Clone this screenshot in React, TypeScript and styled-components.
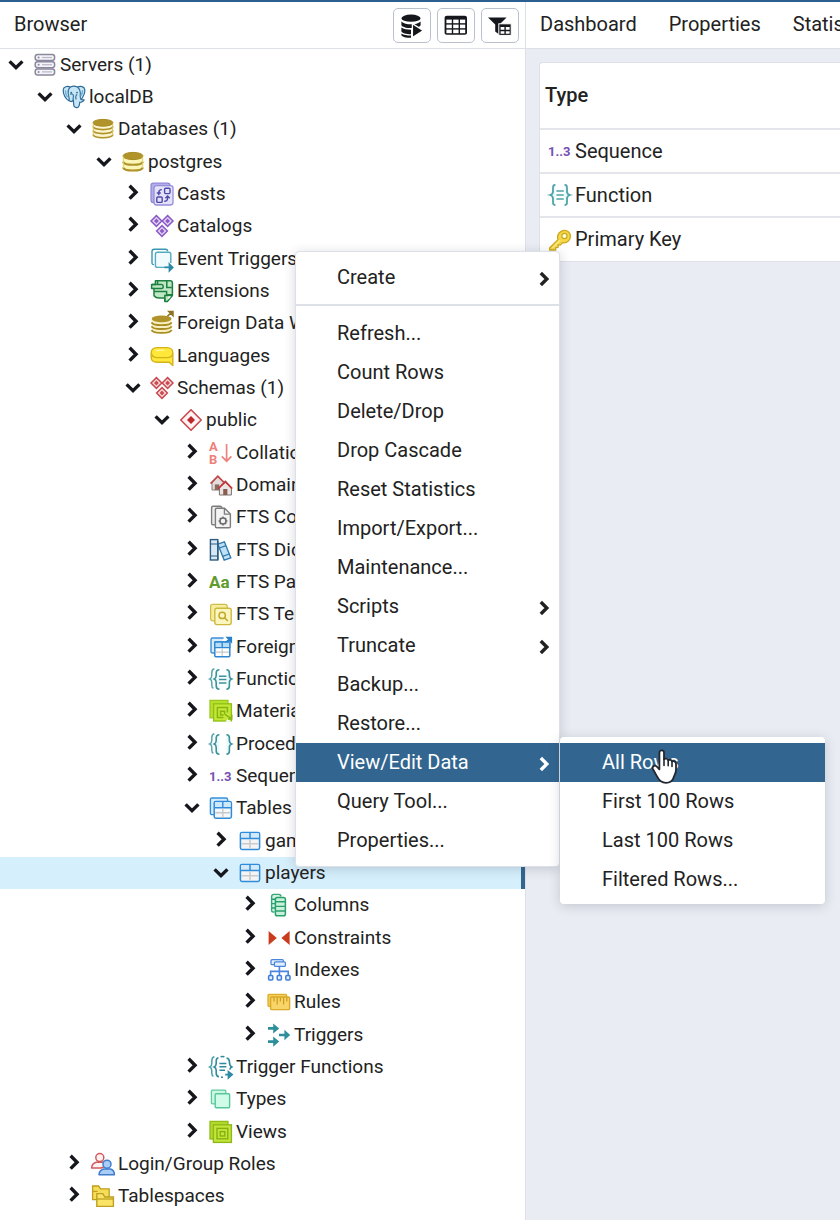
import React from "react";
import styled, { createGlobalStyle } from "styled-components";

const GlobalStyle = createGlobalStyle`
  *, *::before, *::after { box-sizing: border-box; }
  body {
    margin: 0;
    font-family: Roboto, "Liberation Sans", sans-serif;
    color: #222222;
    background: #ffffff;
  }
  button { font: inherit; color: inherit; cursor: pointer; }
`;

/* ---------- layout ---------- */

const Page = styled.div`
  position: relative;
  display: grid;
  grid-template-columns: 5fr 3fr;
  min-height: 100vh;
  border-top: 2px solid #2a5f8f;
  overflow: hidden;
`;

const Sidebar = styled.aside`
  min-width: 0;
  background: #ffffff;
`;

const Main = styled.main`
  display: flex;
  flex-direction: column;
  min-width: 0;
  border-left: 1px solid #dde0e6;
  background: #e9ecf3;
  overflow: hidden;
`;

const PaneHeader = styled.header`
  display: flex;
  align-items: center;
  height: 47px;
  padding-bottom: 2px;
  border-bottom: 1px solid #dde0e6;
  background: #ffffff;
`;

const BrowserTitle = styled.h1`
  flex: 1;
  margin: 0;
  padding-left: 14px;
  font-size: 20px;
  line-height: 24px;
  font-weight: 400;
`;

const Toolbar = styled.div`
  display: flex;
  gap: 6px;
  padding: 3px 6px 0 0;
`;

const ToolButton = styled.button`
  display: grid;
  place-items: center;
  width: 38px;
  height: 35px;
  padding: 0;
  border: 1px solid #bac1cd;
  border-radius: 5px;
  background: #ffffff;
`;

const Tabs = styled.nav`
  display: flex;
  gap: 32px;
  padding-left: 14px;
`;

const Tab = styled.button`
  padding: 0;
  border: 0;
  background: none;
  font-size: 20px;
  line-height: 24px;
  white-space: nowrap;
`;

/* ---------- tree ---------- */

const Tree = styled.ul`
  margin: 0;
  padding: 0;
  list-style: none;
`;

const TreeRow = styled.li<{ $depth: number; $selected?: boolean }>`
  display: flex;
  align-items: center;
  height: 32px;
  padding-left: ${(p) => 5 + Math.floor((p.$depth * 88) / 3)}px;
  white-space: nowrap;
  overflow: hidden;
  background: ${(p) => (p.$selected ? "#d6effc" : "transparent")};
  border-right: 4px solid ${(p) => (p.$selected ? "#326690" : "transparent")};

  &:nth-child(3n + 4) {
    height: 33px;
  }
`;

const Toggle = styled.button`
  display: grid;
  place-items: center;
  flex: none;
  width: 22px;
  height: 24px;
  padding: 0;
  border: 0;
  background: none;
`;

const IconBox = styled.span`
  display: block;
  flex: none;
  width: 24px;
  height: 24px;
  margin: 0 3px 0 6px;

  svg { display: block; overflow: visible; }
`;

const TreeLabel = styled.span`
  font-size: 19px;
  line-height: 24px;
`;

/* ---------- dependency table ---------- */

const Card = styled.section`
  margin: 13px 0 0 13px;
  border: 1px solid #dde0e6;
  border-right: 0;
  border-radius: 4px 0 0 0;
  background: #ffffff;
  overflow: hidden;
`;

const Table = styled.table`
  width: 100%;
  border-collapse: collapse;
  font-size: 20px;
  line-height: 24px;
`;

const HeadCell = styled.th`
  height: 66px;
  padding: 0 5px 2px;
  text-align: left;
  font-weight: 500;
`;

const Cell = styled.td`
  height: 44px;
  padding: 0 2px 1px;
  border-top: 2px solid #e3e5ea;
`;

const CellContent = styled.div`
  display: flex;
  align-items: center;
`;

/* ---------- menus ---------- */

const MenuList = styled.ul`
  position: absolute;
  width: 265px;
  margin: 0;
  padding: 6px 0;
  list-style: none;
  background: #ffffff;
  border: 1px solid #dde0e6;
  border-radius: 4px;
  box-shadow: 0 2px 12px rgba(40, 50, 70, 0.2);
`;

const ContextMenu = styled(MenuList)`
  top: 249px;
  left: 295px;
`;

const SubMenu = styled(MenuList)`
  top: -6px;
  left: calc(100% + 1px);
  padding: 6px 0 5px;
  border: 0;
`;

const MenuItem = styled.li`
  position: relative;
`;

const MenuButton = styled.button<{ $active?: boolean; $nested?: boolean }>`
  display: flex;
  align-items: center;
  justify-content: space-between;
  width: 100%;
  height: 39px;
  padding: 0 8px 2px ${(p) => (p.$nested ? 42 : 41)}px;
  border: 0;
  font-size: 20px;
  line-height: 24px;
  text-align: left;
  white-space: nowrap;
  background: ${(p) => (p.$active ? "#326690" : "transparent")};
  color: ${(p) => (p.$active ? "#ffffff" : "#222222")};

  svg { margin-top: 2px; }
`;

const Divider = styled.li`
  height: 2px;
  margin: 7px 0 8px;
  background: #dde0e6;
`;

const Pointer = styled.svg`
  position: absolute;
  top: 5px;
  left: 90px;
  pointer-events: none;
`;

/* ---------- icons ---------- */

type SvgProps = { children: React.ReactNode; size?: number };
const Svg = ({ children, size = 24 }: SvgProps) => (
  <svg width={size} height={size} viewBox="0 0 24 24" fill="none" aria-hidden="true">
    {children}
  </svg>
);

const ChevronDown = () => (
  <svg width="18" height="14" viewBox="0 0 18 14" fill="none" aria-hidden="true">
    <path d="M2.6 3.4 9 9.6l6.4-6.2" stroke="#15171c" strokeWidth="3.4" />
  </svg>
);

const ChevronRight = () => (
  <svg width="14" height="20" viewBox="0 0 14 20" fill="none" aria-hidden="true">
    <path d="m3.6 1.8 6.4 6.4-6.4 6.4" stroke="#15171c" strokeWidth="3.4" />
  </svg>
);

const MenuChevron = () => (
  <svg width="14" height="16" viewBox="0 0 14 16" fill="none" aria-hidden="true">
    <path d="m3.8 3 6 6-6 6" stroke="currentColor" strokeWidth="3.4" />
  </svg>
);

const ServersIcon = () => (
  <Svg>
    {[1.5, 8.7, 15.9].map((y) => (
      <g key={y}>
        <rect x="2.2" y={y} width="19.4" height="6" rx="2.4" fill="#f4f3f9" stroke="#8a889c" strokeWidth="1.5" />
        <circle cx="5.6" cy={y + 3} r="1" fill="#8a889c" />
        <path d={`M9 ${y + 3}h10`} stroke="#b9b7c9" strokeWidth="1.2" />
      </g>
    ))}
  </Svg>
);

const PostgresIcon = () => (
  <Svg>
    <path
      d="M6.800 15.600C3.600 14.400.9 8.800 1.200 4.800 1.400 1.600 5.200.8 8.400 2c2-1 5-1 7 0 3.200-1.200 7-.6 7.400 2.600.4 3.600-1.800 7.400-3.600 10 .8.6 2.200.2 3 .2-.6 1.800-3 2.600-4.400 2.400-.2 2.400-.4 5.200-2.600 5.400-2.600.4-3.600-1.400-3.600-4l-.2-3.400c-1.200 1.600-3.200 1.400-4.600.4Z"
      fill="#c6e6f5"
      stroke="#2f6a96"
      strokeWidth="1.2"
      strokeLinejoin="round"
    />
    <path
      d="M8.400 2C6 4 5.800 8 6.800 11.600c.8 2 .6 2.800 0 4M15.400 2c2.400 2 3.200 5.600 2.800 8.400-.2 2 .2 3 1 4.200M8 9.400c2-1.200 3.600-.2 3.400 2-.1 1.600-.8 2.400 0 3.800M15.200 9.600c-1.400.6-2 2.800-1 4.800"
      stroke="#2f6a96"
      strokeWidth="1.1"
    />
    <path d="M3.400 5.200c0 2.600 1 5.200 2 7M20.600 5c.2 2-.6 4-1.600 5.600" stroke="#6fb0d4" strokeWidth="1.4" />
    <circle cx="9.200" cy="7.600" r=".9" fill="#2f6a96" />
    <circle cx="15" cy="7.600" r=".9" fill="#2f6a96" />
  </Svg>
);

const DatabasesIcon = () => (
  <Svg>
    <path d="M2 6v12c0 2 4.500 3.400 10 3.400S22 20 22 18V6Z" fill="#fbf5cf" />
    <ellipse cx="12" cy="5.800" rx="10" ry="3.400" fill="#b0932a" stroke="#a98c22" />
    <path
      d="M2 9.600c.6 1.800 4.800 3 10 3s9.400-1.200 10-3M2 13.600c.6 1.800 4.800 3 10 3s9.400-1.200 10-3M2 17.600c.6 1.900 4.800 3.200 10 3.200s9.400-1.300 10-3.200"
      stroke="#b0932a"
      strokeWidth="1.6"
    />
    <path d="M2.300 6.500v11.800M21.700 6.500v11.800" stroke="#d8c25a" strokeWidth="1" />
  </Svg>
);

const DatabaseIcon = () => (
  <Svg>
    <path d="M2 6v12c0 2 4.500 3.400 10 3.400S22 20 22 18V6Z" fill="#fbf5b8" />
    <ellipse cx="12" cy="6" rx="10" ry="3.600" fill="#b0932a" stroke="#a98c22" />
    <path
      d="M2 11.600c.6 1.900 4.800 3.200 10 3.200s9.400-1.300 10-3.200M2 17.400c.6 1.900 4.800 3.200 10 3.200s9.400-1.300 10-3.200"
      stroke="#b0932a"
      strokeWidth="2"
    />
    <path d="M2.300 6.500v11.500M21.700 6.500v11.500" stroke="#e2cf6a" strokeWidth="1" />
  </Svg>
);

const CastsIcon = () => (
  <Svg>
    <rect x="1" y="1.200" width="19" height="19.400" rx="2.400" fill="#b3aee6" stroke="#8c86d8" strokeWidth="1.2" />
    <rect x="4" y="3.600" width="19" height="19.400" rx="2.400" fill="#e4e2fa" stroke="#938edb" strokeWidth="1.3" />
    <rect x="14.600" y="6.200" width="5.400" height="5.400" rx="1" stroke="#4f48a8" strokeWidth="1.4" />
    <rect x="6.800" y="15" width="5.400" height="5.400" rx="1" stroke="#4f48a8" strokeWidth="1.4" />
    <path d="M11.800 7.600c-2.200 0-3 1-3 3v2.600M6.800 11h4M14.200 19.200c2.400 0 3.400-1 3.400-3v-1.600M15.400 16.200l2.200-2.200 2.200 2.200" stroke="#4f48a8" strokeWidth="1.4" />
  </Svg>
);

const TripleDiamond = ({ color, fill }: { color: string; fill: string }) => (
  <Svg>
    {[
      [6.4, 7],
      [17.6, 7],
      [12, 17],
    ].map(([x, y]) => (
      <g key={`${x}-${y}`}>
        <path d={`M${x} ${y - 5.4}l5.400 5.400-5.400 5.400-5.400-5.400Z`} fill={fill} stroke={color} strokeWidth="1.5" />
        <path d={`M${x} ${y - 2.4}l2.400 2.400-2.400 2.400-2.400-2.400Z`} fill={color} />
      </g>
    ))}
  </Svg>
);

const CatalogsIcon = () => <TripleDiamond color="#8a5cc4" fill="#e6d4f8" />;
const SchemasIcon = () => <TripleDiamond color="#c94a50" fill="#fbdcdc" />;

const SchemaIcon = () => (
  <Svg>
    <path d="M12 1.800 22.200 12 12 22.200 1.800 12Z" fill="#fff3f3" stroke="#c9484e" strokeWidth="1.6" strokeLinejoin="round" />
    <path d="m12 8 4 4-4 4-4-4Z" fill="#c0272d" />
  </Svg>
);

const EventTriggersIcon = () => (
  <Svg>
    <path d="M4 17.600c-1.600 0-2-.6-2-2V4.400c0-1.600.6-2.200 2.200-2.200h11.200c1.400 0 2.200.4 2.200 2" stroke="#3b96ae" strokeWidth="1.4" />
    <path d="M18 20.400H7.400c-1.400 0-2-.6-2-2V7.200c0-1.400.6-2 2-2h11.400c1.400 0 2 .6 2 2V16" fill="#f1fbfd" stroke="#55aabf" strokeWidth="1.4" />
    <path d="M14.400 20.400h7M19.400 17l3.400 3.400-3.400 3.400Z" fill="#2e8ba6" stroke="#2e8ba6" strokeWidth="1.6" />
  </Svg>
);

const ExtensionsIcon = () => (
  <Svg>
    <path d="M5.400 1.800h14.800c1.400 0 2.200.8 2.200 2.200v12.600l-5 5.800h-2.600V19H9.200c-2 0-4-.6-5.200-2.200v-7.400H1.600V5.600h3.800Z" fill="#bfe8c4" stroke="#1e8040" strokeWidth="1.5" strokeLinejoin="round" />
    <path d="M2 5.600h9.600c1 0 1.600.6 1.600 1.800s-.6 2-1.600 2H3.400M4 12.600h12.600v3.200h5.400M14.800 22v-5.400H22M7.600 2v3.600M16.800 2v6.600h5" stroke="#1e8040" strokeWidth="1.5" />
    <path d="M18.400 20.400v-3h2.600Z" fill="#ffffff" />
  </Svg>
);

const ForeignWrapperIcon = () => (
  <Svg>
    <path d="M1.600 9v10.400c0 1.800 4.500 3.200 10 3.200s10-1.400 10-3.200V9Z" fill="#f8efc0" />
    <ellipse cx="11.600" cy="7.800" rx="10" ry="3.400" fill="#b0932a" />
    <path
      d="M1.600 11.400c.6 1.700 4.800 2.800 10 2.800s9.400-1.100 10-2.800M1.600 15.200c.6 1.700 4.800 2.800 10 2.800s9.400-1.100 10-2.800M1.600 19c.6 1.700 4.800 2.900 10 2.900s9.400-1.200 10-2.900"
      stroke="#a98c22"
      strokeWidth="1.8"
    />
    <path d="m17.400 5.400 3.400-3.400M18.800.6h4.200v4.200Z" fill="#8f7420" stroke="#8f7420" strokeWidth="1.5" />
  </Svg>
);

const LanguagesIcon = () => (
  <Svg>
    <path d="M7 3.600h10c3.400 0 5.800 2.200 5.800 5v13l-3.600-3.400H7c-3.600 0-5.800-2-5.800-4.600V8.400C1.200 5.600 3.600 3.600 7 3.600Z" fill="#ffe83a" stroke="#d4b21a" strokeWidth="1.4" strokeLinejoin="round" />
    <path d="M1.600 9.600c.4 2.600 2.600 4 5.800 4h9.200c3.400 0 5.600-1.200 6-3.800" stroke="#d4b21a" strokeWidth="1.4" />
    <path d="M6 6.600c1-.4 2-.5 3.400-.5h5" stroke="#fff7ae" strokeWidth="1.4" />
  </Svg>
);

const CollationsIcon = () => (
  <Svg>
    <text x="0" y="10" fontFamily="Roboto, sans-serif" fontWeight="700" fontSize="13" fill="#ee7f7a">A</text>
    <text x="0" y="23" fontFamily="Roboto, sans-serif" fontWeight="700" fontSize="13" fill="#ee7f7a">B</text>
    <path d="M17.600 3v17.200M12.800 15.400l4.800 4.800 4.800-4.800" stroke="#ea8480" strokeWidth="1.7" />
  </Svg>
);

const DomainsIcon = () => (
  <Svg>
    <path d="M3 9.400 8.800 3.400l6 6V17H3Z" fill="#e2dedb" stroke="#8b7d78" strokeWidth="1" />
    <path d="M1.600 10.600 8.800 3.200 16 10.400" stroke="#c0484a" strokeWidth="1.7" />
    <path d="M5.800 17v-5.600h4.400V17Z" fill="#8b6a62" />
    <path d="M10.400 14.400 16.400 9l6 5.600V22H10.400Z" fill="#e9e6e3" stroke="#7d706c" strokeWidth="1" />
    <path d="M9.200 15.600 16.400 8.600l6.800 7" stroke="#c0393c" strokeWidth="1.8" />
    <path d="M14.200 22v-6h4.200v6Z" fill="#8a5d52" />
  </Svg>
);

const FtsConfigIcon = () => (
  <Svg>
    <path d="M5.800 19.800H4c-1 0-1.400-.4-1.400-1.400V2.600c0-1 .4-1.400 1.400-1.400h7.600l1.600 1.600" fill="#eeeeee" stroke="#7c7c7c" strokeWidth="1.4" />
    <path d="M6.400 4.600c0-1 .4-1.400 1.400-1.400h7.800l5.800 5.800v12.400c0 1-.4 1.400-1.400 1.400H7.800c-1 0-1.400-.4-1.400-1.400Z" fill="#f3f3f3" stroke="#7c7c7c" strokeWidth="1.4" />
    <path d="M15.400 3.400V9.200h5.800" stroke="#7c7c7c" strokeWidth="1.3" />
    <circle cx="14" cy="16" r="3" stroke="#6a6a6a" strokeWidth="1.5" />
    <path d="M14 11.600V13M14 19v1.400M9.600 16H11M17 16h1.400M10.900 12.900l1 1M16.100 18.100l1 1M10.900 19.100l1-1M16.100 13.900l1-1" stroke="#6a6a6a" strokeWidth="1.4" />
  </Svg>
);

const FtsDictIcon = () => (
  <Svg>
    <rect x="1.400" y="1.600" width="7.400" height="20.400" fill="#d8e9f4" stroke="#2d5d80" strokeWidth="1.4" />
    <path d="M1.400 6h7.400M1.400 18h7.400" stroke="#2d5d80" strokeWidth="1.2" />
    <path d="m8.800 6.200 6.600-2.400 6.400 16-6.600 2.400Z" fill="#bfe0f6" stroke="#2f79ad" strokeWidth="1.4" />
    <path d="m10.400 10 6.600-2.400M13.600 18.400l6.600-2.400" stroke="#2f79ad" strokeWidth="1.2" />
    <path d="M8.800 3v19" stroke="#2d5d80" strokeWidth="1.4" />
  </Svg>
);

const FtsParserIcon = () => (
  <Svg>
    <text x="0" y="18" fontFamily="Roboto, sans-serif" fontWeight="700" fontSize="17" fill="#5f9a2d">Aa</text>
  </Svg>
);

const FtsTemplateIcon = () => (
  <Svg>
    <rect x="1.600" y="2.400" width="16.600" height="16.400" rx="2" fill="#f6eda0" stroke="#cfbd4a" strokeWidth="1.3" />
    <rect x="5.800" y="6.200" width="16.400" height="16.400" rx="2" fill="#fbf5c0" stroke="#cdb93f" strokeWidth="1.4" />
    <circle cx="13.200" cy="13.400" r="3.200" stroke="#c2a92c" strokeWidth="1.5" />
    <path d="m15.600 15.800 3.200 3.200" stroke="#c2a92c" strokeWidth="1.6" />
  </Svg>
);

const ForeignTablesIcon = () => (
  <Svg>
    <path d="M5.400 18H3.600c-1 0-1.600-.6-1.600-1.600V4.600C2 3.600 2.600 3 3.600 3h11" stroke="#3b8fd6" strokeWidth="1.4" fill="#d8edfc" />
    <rect x="5.800" y="7" width="15" height="14.800" rx="1" fill="#ffffff" stroke="#2f86d2" strokeWidth="1.5" />
    <path d="M5.800 7h15v5.600h-15Z" fill="#b5dcf8" stroke="#2f86d2" strokeWidth="1.3" />
    <path d="M13.200 7v5.600" stroke="#2f86d2" strokeWidth="1.3" />
    <path d="M13.200 13.400V21M6.600 17.200h13.400" stroke="#c3c7cb" strokeWidth="1.2" />
    <path d="M16.600 7.400 20 4.200M18 2.400h4.400v4.600Z" fill="#2a7fc9" stroke="#2a7fc9" strokeWidth="1.4" />
  </Svg>
);

const LeftBrace = "M5.400 1.800C3.200 2.200 2.800 4 2.800 6v2.600c0 1.800-.6 2.800-2 3.400 1.400.6 2 1.600 2 3.400V18c0 1.800.4 2.800 1.600 3.200";
const BracePair =
  "M10.400 2.800c-2.600 0-3.200 1.400-3.200 3.200v2.600c0 1.800-.6 2.800-2 3.400 1.400.6 2 1.600 2 3.400V19c0 2 .6 3.200 3.200 3.200M17.400 2.800c2.400 0 3 1.400 3 3.200v2.600c0 1.800.6 2.800 2.200 3.400-1.600.6-2.200 1.600-2.200 3.400V19c0 2-.6 3.200-3 3.200";

const FunctionsIcon = () => (
  <Svg>
    <path d={LeftBrace} stroke="#5aa6ac" strokeWidth="1.5" />
    <path d={BracePair} fill="#eaf9fb" stroke="#3b929b" strokeWidth="1.6" />
    <path d="M10 9.200h7.400M10 12.600h7.400M10 16h7.400" stroke="#3b929b" strokeWidth="1.5" />
  </Svg>
);

const ProceduresIcon = () => (
  <Svg>
    <path d={LeftBrace} stroke="#5aa6ac" strokeWidth="1.5" />
    <path d={BracePair} fill="#eaf9fb" stroke="#3b929b" strokeWidth="1.6" />
  </Svg>
);

const FunctionIcon = () => (
  <Svg>
    <path d="M7.400 2C5 2 5 3.200 5 5.600v2.600c0 2.200-.6 3.200-2.800 3.800 2.200.6 2.800 1.600 2.800 3.800v2.600C5 20.800 5 22 7.400 22M16.600 2C19 2 19 3.200 19 5.600v2.600c0 2.200.6 3.200 2.800 3.800-2.200.6-2.800 1.600-2.800 3.800v2.600c0 2.400 0 3.600-2.400 3.600" fill="#eafafa" stroke="#4fa3a8" strokeWidth="1.8" />
    <path d="M8.400 8h7.400M8.400 12h7.400M8.400 16h7.400" stroke="#4fa3a8" strokeWidth="1.6" />
  </Svg>
);

const MaterializedIcon = () => (
  <Svg>
    <rect x="1" y="1.400" width="18" height="17.400" fill="#b7e02c" stroke="#9ac81e" strokeWidth="1.3" />
    <rect x="4.600" y="4.800" width="17.800" height="17.200" fill="#c3e836" stroke="#93c018" strokeWidth="1.4" />
    <path d="M18.400 13.400V8.400H8.400v10h6M15.600 15.400v-3.200h-4v3.800h3" stroke="#86b412" strokeWidth="1.5" />
    <path d="M16.400 22.800 19 19.400l3.600 3.400Z" fill="#ffffff" />
    <path d="m16 15.400 6.800 4.400M22.800 15.400V20h-4" stroke="#86b412" strokeWidth="1.4" />
  </Svg>
);

const ViewsIcon = () => (
  <Svg>
    <rect x="1" y="1.400" width="18" height="17.600" fill="#b2d92a" stroke="#90bb18" strokeWidth="1.3" />
    <rect x="4.400" y="4.800" width="18" height="17.600" fill="#c2e63a" stroke="#8fb91a" strokeWidth="1.4" />
    <rect x="8" y="8.400" width="10.800" height="10.400" stroke="#86af12" strokeWidth="1.4" />
    <rect x="11.200" y="11.600" width="4.600" height="4.400" stroke="#86af12" strokeWidth="1.4" />
  </Svg>
);

const SequenceIcon = () => (
  <Svg>
    <text x="0" y="17" fontFamily="Roboto, sans-serif" fontWeight="700" fontSize="13" fill="#7650b4">1..3</text>
  </Svg>
);

const TablesIcon = () => (
  <Svg>
    <path d="M5 18.600H3c-1 0-1.600-.6-1.600-1.600V3.600C1.400 2.600 2 2 3 2h14c1 0 1.600.6 1.600 1.600V5" stroke="#3590dc" strokeWidth="1.4" fill="#d8edfc" />
    <rect x="5.200" y="5.400" width="17.200" height="16.800" rx="1.600" fill="#f6f7f8" stroke="#2f8cdb" strokeWidth="1.5" />
    <path d="M6 6.200h15.600v5.400H6Z" fill="#cfe8fb" />
    <path d="M5.200 11.800h17.200M13.800 5.400v6.400" stroke="#2f8cdb" strokeWidth="1.4" />
    <path d="M13.800 12.600v9M6.200 16.800h15.200" stroke="#c6c9cc" strokeWidth="1.4" />
  </Svg>
);

const TableIcon = () => (
  <Svg>
    <rect x="2.400" y="3.400" width="19.200" height="17" rx="1.600" fill="#f4f4f4" stroke="#2f8cdb" strokeWidth="1.5" />
    <path d="M3.200 4.200h17.600v5H3.200Z" fill="#d3eafb" />
    <path d="M2.400 9.600h19.200M12 3.400v6.200" stroke="#2f8cdb" strokeWidth="1.5" />
    <path d="M12 10.600v9M3.400 14.800h17.200" stroke="#c9cbcd" strokeWidth="1.6" />
  </Svg>
);

const ColumnsIcon = () => (
  <Svg>
    <path d="M7.400 19H6.200c-1 0-1.600-.6-1.600-1.600V3.600C4.600 2.200 5.400 1.400 6.800 1.400h5c1.400 0 2.200.8 2.200 2.200" fill="#d3f3e3" stroke="#35a877" strokeWidth="1.4" />
    <rect x="8.400" y="4.400" width="10" height="18.400" rx="1.800" fill="#c9f0dd" stroke="#2aa06c" strokeWidth="1.5" />
    <path d="M8.400 8.800h10M8.400 13.400h10M8.400 18h10M4.600 6.200h3.800M4.600 10.600h3.800M4.600 15h3.800" stroke="#2aa06c" strokeWidth="1.4" />
  </Svg>
);

const ConstraintsIcon = () => (
  <Svg>
    <path d="m1.600 5 8.200 7-8.200 7Z" fill="#ca3a1c" />
    <path d="M22.600 5 14.400 12l8.200 7Z" fill="#ca3a1c" />
  </Svg>
);

const IndexesIcon = () => (
  <Svg>
    <rect x="4" y="1.600" width="12.400" height="5" rx="1.200" fill="#e3effd" stroke="#4a86dc" strokeWidth="1.3" />
    <rect x="7.400" y="3.800" width="11" height="4.600" rx="1.200" fill="#e3effd" stroke="#4a86dc" strokeWidth="1.3" />
    <path d="M12.400 8.600V17M3.600 17v-3.600h17.600V17" stroke="#4a86dc" strokeWidth="1.6" />
    {[1.6, 10.2, 18.8].map((x) => (
      <rect key={x} x={x} y="17.400" width="4.200" height="4.600" rx="1" fill="#e3effd" stroke="#3f7dd8" strokeWidth="1.5" />
    ))}
  </Svg>
);

const RulesIcon = () => (
  <Svg>
    <rect x="1" y="4.400" width="18.600" height="12" rx="1" fill="#f5cf5a" stroke="#dcae2c" strokeWidth="1.3" />
    <rect x="3.600" y="7" width="19" height="12.600" rx="1" fill="#f8d568" stroke="#d9a928" strokeWidth="1.4" />
    <path d="M7 7.400v4M10.200 7.400v7M13.400 7.400v4M16.600 7.400v7M19.800 7.400v4" stroke="#cf9e20" strokeWidth="1.3" />
  </Svg>
);

const TriggersIcon = () => (
  <Svg>
    <path d="M1 5.400h8M1 18.600h8M12 12h8" stroke="#2e8f9c" strokeWidth="2.6" />
    <path d="M6.200.4 12.200 5.400l-6 5.200ZM6.200 13.400l6 5.200-6 5.200ZM17.400 6.800l5.800 5.200-5.800 5.200Z" fill="#2e8f9c" />
  </Svg>
);

const TriggerFunctionsIcon = () => (
  <Svg>
    <path d={LeftBrace} stroke="#4ba0a8" strokeWidth="1.5" />
    <path d="M9.400 2.800C7.400 3.200 7.200 4.400 7.200 6v2.600c0 1.800-.6 2.800-2 3.400 1.400.6 2 1.600 2 3.400V18c0 2.200.6 3.600 2.800 3.800M17.600 3c2.200.6 2.800 1.800 2.800 3.400 0 2.400.4 4.400 2.400 5.600-1.200.6-1.800 1.400-2 2.600M11.600 1.800c1.200-.4 2.600-.4 3.800 0" stroke="#2f8a9c" strokeWidth="1.6" />
    <path d="M10.400 8.400h7M10.400 11.800h7M10.400 15.200h5.600M12 22.200h2" stroke="#2f8a9c" strokeWidth="1.5" />
    <path d="M16.200 19.600h4M19.400 16.600l3.800 3-3.800 3.400Z" fill="#2e8ba6" stroke="#2e8ba6" strokeWidth="1.6" />
  </Svg>
);

const TypesIcon = () => (
  <Svg>
    <rect x="2.400" y="3.200" width="14.400" height="13.600" rx="1" fill="#c9f7e2" stroke="#5ccba0" strokeWidth="1.3" />
    <rect x="6.200" y="6.800" width="14.400" height="14" rx="1" fill="#cffbe8" stroke="#55c79b" strokeWidth="1.4" />
  </Svg>
);

const RolesIcon = () => (
  <Svg>
    <circle cx="8.800" cy="5.600" r="4" fill="#fff2f2" stroke="#d25a5f" strokeWidth="1.5" />
    <path d="M.6 16c.2-3.400 1.800-5 4.600-5.800h7c2.200.6 3.400 1.800 4 3.400L10 16Z" fill="#fff2f2" stroke="#d25a5f" strokeWidth="1.5" strokeLinejoin="round" />
    <circle cx="16" cy="12.200" r="4" fill="#a9cdf6" stroke="#3f7dcc" strokeWidth="1.5" />
    <path d="M8 22.800c.2-3 1.600-5 4.600-5.800h7c2.400.8 3.800 2.800 3.800 5.800Z" fill="#a9cdf6" stroke="#3f7dcc" strokeWidth="1.5" strokeLinejoin="round" />
  </Svg>
);

const TablespacesIcon = () => (
  <Svg>
    <path d="M1.600 15.600V2h6l2 2.800h8.600v10.800Z" fill="#f6dd58" stroke="#bf9f20" strokeWidth="1.3" />
    <path d="M1.600 7.400h5" stroke="#bf9f20" strokeWidth="1.2" />
    <path d="M5.800 22.400V9.600h6l2 3.400h8.600v9.400Z" fill="#f9e468" stroke="#bf9f20" strokeWidth="1.4" />
    <path d="M5.800 15h16.400" stroke="#bf9f20" strokeWidth="1.3" />
  </Svg>
);

const KeyIcon = () => (
  <Svg>
    <path d="M1.600 21 10 12.600c-.8-2.200-.4-4.800 1.400-6.800 2.600-2.800 6.600-3.200 9.200-.8 2.600 2.600 2.400 6.400-.2 9-1.800 1.600-3.800 2.200-6 1.600l-1.800 2.200-2.400.2-.2 2.400-2.200.2-.2 2.400H1.600Z" fill="#f4d84a" stroke="#cba91e" strokeWidth="1.3" strokeLinejoin="round" />
    <circle cx="16.400" cy="9" r="2.600" fill="#fffbe0" stroke="#cba91e" strokeWidth="1.2" />
    <path d="m4.400 21 7.600-7.600" stroke="#fbeb8c" strokeWidth="1.2" />
  </Svg>
);

const QueryToolIcon = () => (
  <Svg>
    <ellipse cx="11" cy="4.200" rx="9.600" ry="3.600" fill="#15171c" />
    <path d="M1.400 7.400c2 2 5.600 2.800 9.600 2.800s7.600-.8 9.600-2.800v3.800c-.6 1.600-4.800 2.900-9.600 2.900s-9-1.300-9.600-2.900Z" fill="#15171c" />
    <path d="M1.400 13.600c2 1.600 5.600 2.200 9.600 2.200v4.400c-4.800 0-9-1.200-9.600-2.800ZM1.400 19.600c2 1.600 5.600 2 9.600 2v2.200c-4.800 0-9-1-9.600-2.600Z" fill="#15171c" />
    <path d="m12.400 9.600 11 7-11 7Z" fill="#15171c" stroke="#ffffff" strokeWidth="1.3" />
  </Svg>
);

const ViewDataIcon = () => (
  <Svg>
    <path d="M.6 4.200C.6 2.600 1.400 1.800 3 1.800h17.600c1.600 0 2.400.8 2.400 2.400v14.400c0 1.400-.8 2.200-2.400 2.200H3C1.400 20.800.6 20 .6 18.600Z" fill="#15171c" />
    {[5.6, 10.6, 15.6].map((y) => (
      <g key={y} fill="#ffffff">
        <rect x="2.400" y={y} width="5.400" height="3.600" />
        <rect x="9.200" y={y} width="5.400" height="3.600" />
        <rect x="16" y={y} width="5.200" height="3.600" />
      </g>
    ))}
  </Svg>
);

const FilterIcon = () => (
  <Svg>
    <path d="M0 3.400h18.600l-6.400 6.400v11.400l-5-3.600V10.600Z" fill="#15171c" />
    <rect x="10.800" y="9.800" width="12.400" height="11.600" fill="#15171c" stroke="#ffffff" strokeWidth="1" />
    <path d="M12.600 13h3.800v2.800h-3.800ZM17.800 13h3.800v2.800h-3.800ZM12.600 17.200h3.800v2.600h-3.800ZM17.800 17.200h3.800v2.600h-3.800Z" fill="#ffffff" />
  </Svg>
);

const HandPointer = () => (
  <Pointer width="30" height="38" viewBox="0 0 30 38" fill="none" aria-hidden="true">
    <path
      d="M9.400 4.600c0-3 4.600-3 4.600 0v6.600c1.200-1 3.800-.8 4.200 1 1.200-.9 3.400-.4 3.800 1.200 1.400-.8 4 0 4 2.400V22c0 3.400-1.800 5.400-2.600 8-1 3.200-4 4.800-7.400 4.800-4.200 0-6.800-2-8.800-6.200L3 21.200c-1.400-2.600 1.600-4.600 3.600-2.800l2.800 3Z"
      fill="#ffffff"
      stroke="#22262e"
      strokeWidth="1.8"
      strokeLinejoin="round"
    />
    <path d="M14 11v6.400M18.200 12v5.800M22 13.400v5" stroke="#22262e" strokeWidth="1.6" strokeLinecap="round" />
  </Pointer>
);

/* ---------- data ---------- */

type Node = {
  label: string;
  depth: number;
  icon: React.ComponentType;
  open?: boolean;
  selected?: boolean;
};

const NODES: Node[] = [
  { label: "Servers (1)", depth: 0, icon: ServersIcon, open: true },
  { label: "localDB", depth: 1, icon: PostgresIcon, open: true },
  { label: "Databases (1)", depth: 2, icon: DatabasesIcon, open: true },
  { label: "postgres", depth: 3, icon: DatabaseIcon, open: true },
  { label: "Casts", depth: 4, icon: CastsIcon },
  { label: "Catalogs", depth: 4, icon: CatalogsIcon },
  { label: "Event Triggers", depth: 4, icon: EventTriggersIcon },
  { label: "Extensions", depth: 4, icon: ExtensionsIcon },
  { label: "Foreign Data Wrappers", depth: 4, icon: ForeignWrapperIcon },
  { label: "Languages", depth: 4, icon: LanguagesIcon },
  { label: "Schemas (1)", depth: 4, icon: SchemasIcon, open: true },
  { label: "public", depth: 5, icon: SchemaIcon, open: true },
  { label: "Collations", depth: 6, icon: CollationsIcon },
  { label: "Domains", depth: 6, icon: DomainsIcon },
  { label: "FTS Configurations", depth: 6, icon: FtsConfigIcon },
  { label: "FTS Dictionaries", depth: 6, icon: FtsDictIcon },
  { label: "FTS Parsers", depth: 6, icon: FtsParserIcon },
  { label: "FTS Templates", depth: 6, icon: FtsTemplateIcon },
  { label: "Foreign Tables", depth: 6, icon: ForeignTablesIcon },
  { label: "Functions", depth: 6, icon: FunctionsIcon },
  { label: "Materialized Views", depth: 6, icon: MaterializedIcon },
  { label: "Procedures", depth: 6, icon: ProceduresIcon },
  { label: "Sequences", depth: 6, icon: SequenceIcon },
  { label: "Tables", depth: 6, icon: TablesIcon, open: true },
  { label: "games", depth: 7, icon: TableIcon },
  { label: "players", depth: 7, icon: TableIcon, open: true, selected: true },
  { label: "Columns", depth: 8, icon: ColumnsIcon },
  { label: "Constraints", depth: 8, icon: ConstraintsIcon },
  { label: "Indexes", depth: 8, icon: IndexesIcon },
  { label: "Rules", depth: 8, icon: RulesIcon },
  { label: "Triggers", depth: 8, icon: TriggersIcon },
  { label: "Trigger Functions", depth: 6, icon: TriggerFunctionsIcon },
  { label: "Types", depth: 6, icon: TypesIcon },
  { label: "Views", depth: 6, icon: ViewsIcon },
  { label: "Login/Group Roles", depth: 2, icon: RolesIcon },
  { label: "Tablespaces", depth: 2, icon: TablespacesIcon },
];

const TOOLS = [
  { label: "Query Tool", icon: QueryToolIcon },
  { label: "View Data", icon: ViewDataIcon },
  { label: "Filtered Rows", icon: FilterIcon },
];

const DEPENDENCIES = [
  { label: "Sequence", icon: SequenceIcon },
  { label: "Function", icon: FunctionIcon },
  { label: "Primary Key", icon: KeyIcon },
];

const MENU: { label: string; arrow?: boolean }[] = [
  { label: "Refresh..." },
  { label: "Count Rows" },
  { label: "Delete/Drop" },
  { label: "Drop Cascade" },
  { label: "Reset Statistics" },
  { label: "Import/Export..." },
  { label: "Maintenance..." },
  { label: "Scripts", arrow: true },
  { label: "Truncate", arrow: true },
  { label: "Backup..." },
  { label: "Restore..." },
];

const VIEW_DATA = ["All Rows", "First 100 Rows", "Last 100 Rows", "Filtered Rows..."];

const Entry = ({ label, arrow }: { label: string; arrow?: boolean }) => (
  <MenuItem role="none">
    <MenuButton type="button" role="menuitem" aria-haspopup={arrow ? "menu" : undefined}>
      {label}
      {arrow && <MenuChevron />}
    </MenuButton>
  </MenuItem>
);

export default function App() {
  return (
    <>
      <GlobalStyle />
      <Page>
        <Sidebar>
          <PaneHeader>
            <BrowserTitle>Browser</BrowserTitle>
            <Toolbar>
              {TOOLS.map(({ label, icon: Icon }) => (
                <ToolButton key={label} type="button" aria-label={label}>
                  <Icon />
                </ToolButton>
              ))}
            </Toolbar>
          </PaneHeader>
          <Tree role="tree" aria-label="Browser">
            {NODES.map(({ label, depth, icon: Icon, open, selected }) => (
              <TreeRow
                key={label}
                role="treeitem"
                aria-level={depth + 1}
                aria-expanded={!!open}
                aria-selected={!!selected}
                $depth={depth}
                $selected={selected}
              >
                <Toggle type="button" aria-label={`${open ? "Collapse" : "Expand"} ${label}`}>
                  {open ? <ChevronDown /> : <ChevronRight />}
                </Toggle>
                <IconBox>
                  <Icon />
                </IconBox>
                <TreeLabel>{label}</TreeLabel>
              </TreeRow>
            ))}
          </Tree>
        </Sidebar>

        <Main>
          <PaneHeader>
            <Tabs aria-label="Object panels">
              <Tab type="button">Dashboard</Tab>
              <Tab type="button">Properties</Tab>
              <Tab type="button">Statistics</Tab>
            </Tabs>
          </PaneHeader>
          <Card>
            <Table>
              <thead>
                <tr>
                  <HeadCell scope="col">Type</HeadCell>
                </tr>
              </thead>
              <tbody>
                {DEPENDENCIES.map(({ label, icon: Icon }) => (
                  <tr key={label}>
                    <Cell>
                      <CellContent>
                        <IconBox>
                          <Icon />
                        </IconBox>
                        {label}
                      </CellContent>
                    </Cell>
                  </tr>
                ))}
              </tbody>
            </Table>
          </Card>
        </Main>

        <ContextMenu role="menu" aria-label="Table actions">
          <Entry label="Create" arrow />
          <Divider role="separator" />
          {MENU.map((item) => (
            <Entry key={item.label} {...item} />
          ))}
          <MenuItem role="none">
            <MenuButton type="button" role="menuitem" aria-haspopup="menu" aria-expanded="true" $active>
              View/Edit Data
              <MenuChevron />
            </MenuButton>
            <SubMenu role="menu" aria-label="View/Edit Data">
              {VIEW_DATA.map((label, i) => (
                <MenuItem key={label} role="none">
                  <MenuButton type="button" role="menuitem" $nested $active={i === 0}>
                    {label}
                  </MenuButton>
                  {i === 0 && <HandPointer />}
                </MenuItem>
              ))}
            </SubMenu>
          </MenuItem>
          <Entry label="Query Tool..." />
          <Entry label="Properties..." />
        </ContextMenu>
      </Page>
    </>
  );
}
